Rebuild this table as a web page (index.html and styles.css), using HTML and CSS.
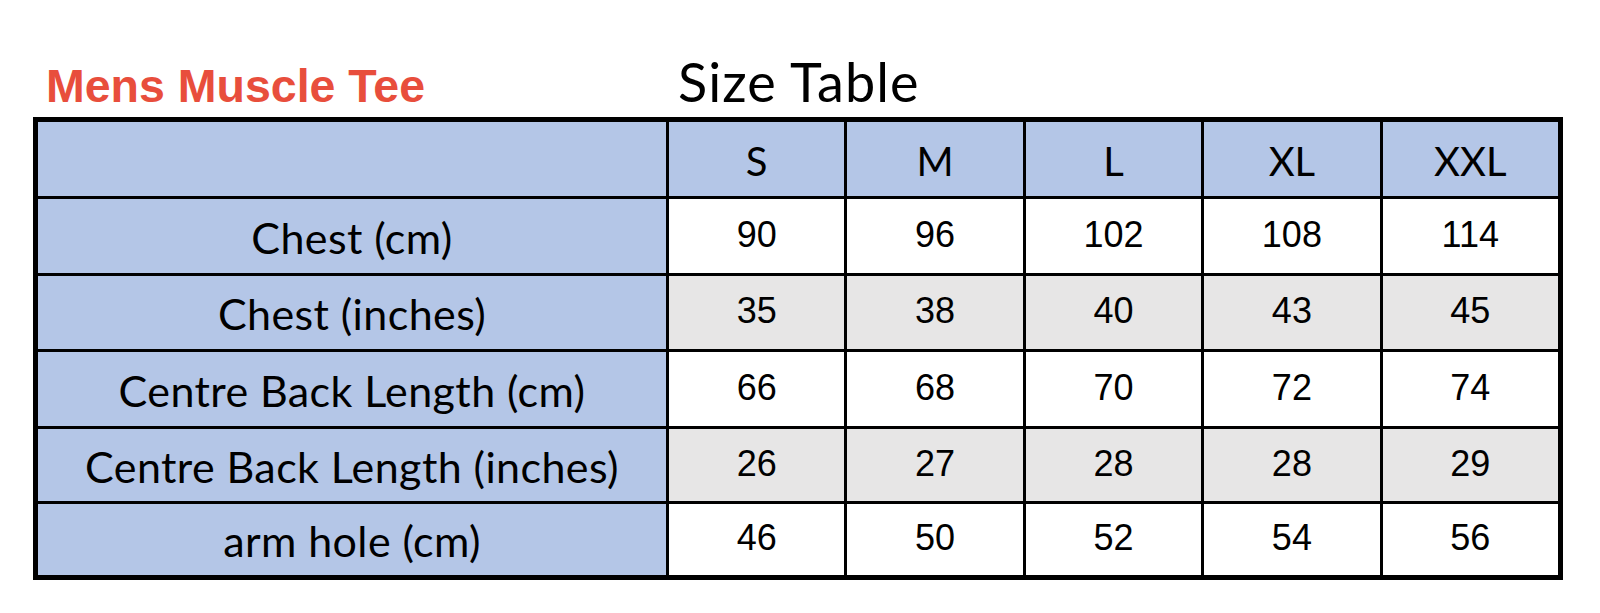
FILE: index.html
```html
<!DOCTYPE html>
<html>
<head>
<meta charset="utf-8">
<link rel="stylesheet" href="styles.css">
</head>
<body>
<div class="page">
  <div class="heading">
    <div class="brand">Mens Muscle Tee</div>
    <div class="title">Size Table</div>
  </div>
  <div class="table">
    <div class="cell head label"></div>
    <div class="cell head">S</div>
    <div class="cell head">M</div>
    <div class="cell head">L</div>
    <div class="cell head">XL</div>
    <div class="cell head">XXL</div>

    <div class="cell label">Chest (cm)</div>
    <div class="cell num">90</div>
    <div class="cell num">96</div>
    <div class="cell num">102</div>
    <div class="cell num">108</div>
    <div class="cell num">114</div>

    <div class="cell label">Chest (inches)</div>
    <div class="cell num alt">35</div>
    <div class="cell num alt">38</div>
    <div class="cell num alt">40</div>
    <div class="cell num alt">43</div>
    <div class="cell num alt">45</div>

    <div class="cell label">Centre Back Length (cm)</div>
    <div class="cell num">66</div>
    <div class="cell num">68</div>
    <div class="cell num">70</div>
    <div class="cell num">72</div>
    <div class="cell num">74</div>

    <div class="cell label">Centre Back Length (inches)</div>
    <div class="cell num alt">26</div>
    <div class="cell num alt">27</div>
    <div class="cell num alt">28</div>
    <div class="cell num alt">28</div>
    <div class="cell num alt">29</div>

    <div class="cell label">arm hole (cm)</div>
    <div class="cell num">46</div>
    <div class="cell num">50</div>
    <div class="cell num">52</div>
    <div class="cell num">54</div>
    <div class="cell num">56</div>
  </div>
</div>
</body>
</html>
```

FILE: styles.css
```css
html, body {
  margin: 0;
  padding: 0;
  background: #ffffff;
}

.page {
  padding-left: 33px;
  width: 1530px;
}

.heading {
  display: flex;
  align-items: baseline;
  height: 117px;
  box-sizing: border-box;
  padding-top: 55px;
}

.brand {
  font-family: "Liberation Sans", Arial, sans-serif;
  font-weight: bold;
  font-size: 46.5px;
  line-height: 1;
  color: #E84E3C;
  margin-left: 13px;
  width: 632px;
}

.title {
  font-family: Lato, "Open Sans", sans-serif;
  font-size: 54px;
  letter-spacing: 1.1px;
  line-height: 1;
  color: #000;
}

.table {
  display: grid;
  grid-template-columns: 628px repeat(5, 1fr);
  grid-template-rows: 74px 74px 73px 74px 72px 71px;
  gap: 3px;
  background: #000;
  border: 5px solid #000;
  width: 1530px;
  box-sizing: border-box;
}

.cell {
  display: flex;
  align-items: center;
  justify-content: center;
  background: #ffffff;
  color: #000;
  box-sizing: border-box;
}

.head {
  background: #B4C6E7;
  font-family: Lato, "Open Sans", sans-serif;
  font-size: 40px;
  padding-top: 4px;
}

.label {
  background: #B4C6E7;
  font-family: Lato, "Open Sans", sans-serif;
  font-size: 43px;
  letter-spacing: 0.4px;
  padding-top: 2px;
}

.num {
  font-family: "Liberation Sans", Arial, sans-serif;
  font-size: 36px;
  padding-bottom: 3px;
}

.alt {
  background: #E7E6E6;
}
```
